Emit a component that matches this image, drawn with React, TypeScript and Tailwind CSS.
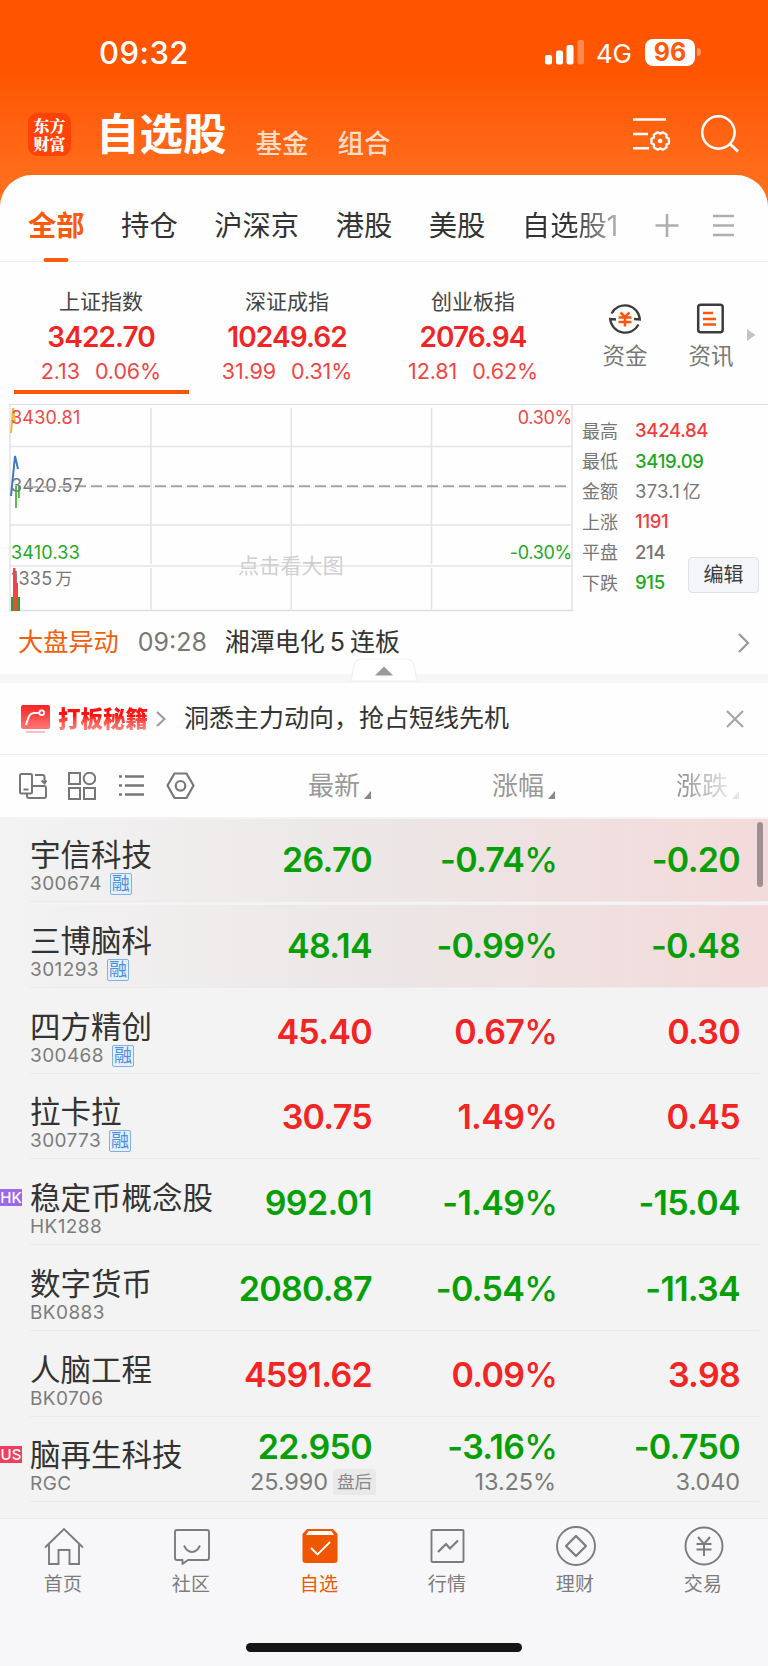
import type { ReactNode } from "react";

const GREEN = "text-[#06a006]";
const RED = "text-[#f32424]";

const groups = ["全部", "持仓", "沪深京", "港股", "美股"];

const indices = [
	{ name: "上证指数", value: "3422.70", change: "2.13", percent: "0.06%" },
	{ name: "深证成指", value: "10249.62", change: "31.99", percent: "0.31%" },
	{ name: "创业板指", value: "2076.94", change: "12.81", percent: "0.62%" },
];

const stats = [
	{ label: "最高", value: "3424.84", color: "text-[#f23c3c]" },
	{ label: "最低", value: "3419.09", color: "text-[#1fa81f]" },
	{ label: "金额", value: "373.1", unit: "亿", color: "text-[#777]" },
	{ label: "上涨", value: "1191", color: "text-[#f23c3c]" },
	{ label: "平盘", value: "214", color: "text-[#777]" },
	{ label: "下跌", value: "915", color: "text-[#1fa81f]" },
];

const columns = ["最新", "涨幅", "涨跌"];

interface Stock {
	name: string;
	code: string;
	price: string;
	percent: string;
	diff: string;
	up?: boolean;
	margin?: boolean;
	flash?: boolean;
	market?: "HK" | "US";
	after?: { price: string; percent: string; diff: string };
}

const stocks: Stock[] = [
	{ name: "宇信科技", code: "300674", price: "26.70", percent: "-0.74%", diff: "-0.20", margin: true, flash: true },
	{ name: "三博脑科", code: "301293", price: "48.14", percent: "-0.99%", diff: "-0.48", margin: true, flash: true },
	{ name: "四方精创", code: "300468", price: "45.40", percent: "0.67%", diff: "0.30", up: true, margin: true },
	{ name: "拉卡拉", code: "300773", price: "30.75", percent: "1.49%", diff: "0.45", up: true, margin: true },
	{ name: "稳定币概念股", code: "HK1288", price: "992.01", percent: "-1.49%", diff: "-15.04", market: "HK" },
	{ name: "数字货币", code: "BK0883", price: "2080.87", percent: "-0.54%", diff: "-11.34" },
	{ name: "人脑工程", code: "BK0706", price: "4591.62", percent: "0.09%", diff: "3.98", up: true },
	{
		name: "脑再生科技",
		code: "RGC",
		price: "22.950",
		percent: "-3.16%",
		diff: "-0.750",
		market: "US",
		after: { price: "25.990", percent: "13.25%", diff: "3.040" },
	},
];

const marketStyles = {
	HK: "bg-[#9d68ea]",
	US: "bg-[#ef3f5f]",
};

const StatusBar = () => {
	return (
		<div className="flex h-[98px] items-center pt-[6px] pl-[99px] text-white">
			<span className="w-[446px] pt-[2px] text-[31px] font-medium tracking-[0.5px]">09:32</span>
			<svg width="39" height="26" viewBox="0 0 39 26" fill="#fff">
				<rect x="0" y="16" width="7" height="9.5" rx="2" />
				<rect x="11" y="11.500" width="7" height="14" rx="2" />
				<rect x="21.500" y="6" width="7" height="19.500" rx="2" />
				<rect x="32.500" y="1" width="6.500" height="24.500" rx="2" opacity="0.3" />
			</svg>
			<span className="ml-[12px] w-[49px] pt-[3px] text-[26px] tracking-[-0.3px]">4G</span>
			<span className="flex h-[27px] w-[50px] items-center justify-center rounded-[8px] bg-white text-[25px] leading-none font-bold text-[#ff5a0a]">
				96
			</span>
			<span className="ml-[2px] h-[8px] w-[4px] rounded-r-full bg-white/40" />
		</div>
	);
};

const TopBar = () => {
	return (
		<div className="flex h-[77px] items-start pl-[28px] text-white">
			<div className="mt-[15px] flex h-[43px] w-[43px] items-center justify-center rounded-[9px] bg-[#ff4308]">
				<span className="w-[32px] font-['Noto_Serif_CJK_SC','Noto_Sans_CJK_SC',serif] text-[16px] leading-[18px] font-black">
					东方财富
				</span>
			</div>
			<h1 className="ml-[25px] text-[43.500px] leading-[72px] font-bold">自选股</h1>
			<span className="ml-[29px] pt-[9px] text-[26.500px] leading-[72px] font-medium text-[#ffdcc8]">基金</span>
			<span className="ml-[29px] pt-[9px] text-[26.500px] leading-[72px] font-medium text-[#ffdcc8]">组合</span>
			<svg className="mt-[18px] ml-[242px] shrink-0" width="38" height="36" viewBox="0 0 38 36" fill="none" stroke="#fff" strokeWidth="2.600">
				<path d="M0 3.500h33M0 18h15M0 32.300h16" />
				<path
					transform="translate(27.200 25) scale(0.93)"
					strokeWidth="2.500"
					strokeLinejoin="round"
					d="M9.400-2.350V2.350L6.750 3.900L6.740 6.980L2.670 9.320L0 7.800L-2.670 9.320L-6.740 6.980L-6.750 3.900L-9.400 2.350V-2.350L-6.750-3.900L-6.740-6.980L-2.670-9.320L0-7.800L2.670-9.320L6.740-6.980L6.750-3.900z"
				/>
				<circle cx="27.200" cy="25" r="2.300" fill="#fff" stroke="none" />
			</svg>
			<svg className="mt-[17px] ml-[30px] shrink-0" width="40" height="40" viewBox="0 0 40 40" fill="none" stroke="#fff" strokeWidth="2.500">
				<circle cx="17.400" cy="17.500" r="16.200" />
				<path d="M28.500 28.500l8.500 8" strokeWidth="3" />
			</svg>
		</div>
	);
};

const GroupTabs = () => {
	return (
		<div className="flex h-[87px] items-start border-b border-[#eeeef0] pl-[28px] text-[28.300px] leading-[103px] text-[#333]">
			{groups.map((group, index) => (
				<div
					key={group}
					className={`mr-[36.500px] h-[87px] shrink-0 ${index === 0 ? "relative font-bold text-[#f95a0c]" : ""}`}
				>
					{group}
					{index === 0 && (
						<span className="absolute bottom-0 left-1/2 h-[4px] w-[25px] -translate-x-1/2 rounded-sm bg-[#f95a0c]" />
					)}
				</div>
			))}
			<div className="w-[97px] shrink-0 bg-gradient-to-r from-[#333] from-50% to-[#aaa] to-95% bg-clip-text text-transparent">
				自选股1
			</div>
			<svg className="mt-[38px] ml-[36px] shrink-0" width="24" height="24" viewBox="0 0 24 24" stroke="#aeaeae" strokeWidth="2.600">
				<path d="M0.500 12.500h23M12 1v23" />
			</svg>
			<svg className="mt-[38px] ml-[34px] shrink-0" width="22" height="24" viewBox="0 0 22 24" stroke="#aeaeae" strokeWidth="2.600">
				<path d="M0 3h21M0 12.500h21M0 22h21" />
			</svg>
		</div>
	);
};

const IndexCards = () => {
	return (
		<div className="flex h-[142px] pl-[8px]">
			{indices.map((item, index) => (
				<div key={item.name} className="relative flex w-[186px] shrink-0 flex-col items-center pt-[26px]">
					<div className="text-[21px] leading-[28px] text-[#444]">{item.name}</div>
					<div className="mt-[4px] text-[28px] leading-[34px] font-semibold tracking-[-0.900px] text-[#f32424]">
						{item.value}
					</div>
					<div className="mt-[3px] flex gap-[15px] text-[21.500px] leading-[28px] tracking-[-0.100px] text-[#f04646]">
						<span>{item.change}</span>
						<span>{item.percent}</span>
					</div>
					{index === 0 && <span className="absolute bottom-[10px] left-[6px] h-[4px] w-[175px] bg-[#ff560d]" />}
				</div>
			))}
			<div className="ml-[26px] flex w-[66px] shrink-0 flex-col items-center pt-[40px] text-[22.500px] leading-[30px] text-[#777]">
				<svg className="mb-[5px]" width="34" height="34" viewBox="0 0 34 34" fill="none" stroke="#3c3c3c" strokeWidth="2.300">
					<path d="M3.500 11.500A15 15 0 0 1 31.800 17.500L26 17" />
					<path d="M30.500 22.500A15 15 0 0 1 2.200 17L8 17.500" />
					<path stroke="#ff560d" strokeWidth="2.500" d="M12.500 10.500l4.500 4.500 4.500-4.500M10.500 15.500h13M10.500 20h13M17 15v9.500" />
				</svg>
				资金
			</div>
			<div className="ml-[20px] flex w-[66px] shrink-0 flex-col items-center pt-[40px] text-[22.500px] leading-[30px] text-[#777]">
				<svg className="mb-[5px]" width="34" height="34" viewBox="0 0 34 34" fill="none" stroke="#3c3c3c" strokeWidth="2.500">
					<rect x="4.200" y="2.800" width="24.500" height="27.500" rx="2.500" />
					<path stroke="#ff560d" d="M9 11h10M9 17h13M9 22.500h13" />
				</svg>
				资讯
			</div>
			<svg className="mt-[67px] ml-[3px] shrink-0" width="9" height="12" viewBox="0 0 9 12" fill="#c4c4c4">
				<path d="M0 0l8.500 6L0 12z" />
			</svg>
		</div>
	);
};

const IndexChart = () => {
	return (
		<div className="flex h-[208px] pl-[9px]">
			<div className="relative w-[564px] shrink-0 text-[18px] leading-[20px] tracking-[0.200px] text-[#777]">
				<svg width="564" height="208" viewBox="0 0 564 208" fill="none">
					<path d="M1 0v206M563 0v206M0 205.500h564" stroke="#dddde6" strokeWidth="1.300" />
					<path d="M142 3v156M282.200 3v156M422.500 3v156M142 163v43M282.200 163v43M422.500 163v43" stroke="#e3e3ee" strokeWidth="1.600" />
					<path d="M0 41.500h563M0 120h563M0 161h563" stroke="#e3e3ee" strokeWidth="1.600" />
					<path d="M66 81.200h494" stroke="#a2a2a2" strokeWidth="2" strokeDasharray="11 5" />
					<path d="M2 28L4 3L6 17" stroke="#f3b73e" strokeWidth="2" />
					<path d="M2 91L6 51L9 64" stroke="#3f79c4" strokeWidth="2" />
					<path d="M7 81v22M10 81v12" stroke="#5dbd4f" strokeWidth="2" />
				</svg>
				<span className="absolute top-[3px] left-[2px] text-[#f04646]">3430.81</span>
				<span className="absolute top-[3px] right-[1px] tracking-[-0.300px] text-[#f04646]">0.30%</span>
				<span className="absolute top-[71px] left-[2px]">3420.57</span>
				<span className="absolute top-[138px] left-[2px] text-[#1fa81f]">3410.33</span>
				<span className="absolute top-[138px] right-[1px] tracking-[-0.300px] text-[#1fa81f]">-0.30%</span>
				<span className="absolute top-[164px] left-[2px]">1335<span className="pl-[3px] text-[17px]">万</span></span>
				<span className="absolute top-[151px] left-[229px] text-[21px] text-[#cfcfcf]">点击看大图</span>
				<svg className="absolute top-[163px] left-[2px]" width="9" height="43" viewBox="0 0 9 43">
					<path d="M0 29h2.500v14H0zM6.500 29H9v14H6.500z" fill="#1fa81f" />
					<path d="M2 0h2.500v6h1v9h1.500v28H2z" fill="#ee4545" />
				</svg>
				<svg className="absolute top-[81px] left-[18px]" width="48" height="2" viewBox="0 0 48 2">
					<path d="M0 1h48" stroke="#a2a2a2" strokeWidth="1.500" strokeDasharray="11 5" />
				</svg>
			</div>
			<div className="flex w-[106px] shrink-0 flex-col pt-[11px] pl-[9px]">
				{stats.map((stat) => (
					<div key={stat.label} className="flex h-[30.400px] items-center text-[18px] whitespace-nowrap">
						<span className="w-[53px] shrink-0 text-[#777]">{stat.label}</span>
						<span className={`text-[18.500px] ${stat.unit ? "tracking-[0.200px]" : "font-medium tracking-[-0.300px]"} ${stat.color}`}>
							{stat.value}
							{stat.unit && <span className="pl-[3px] text-[18px]">{stat.unit}</span>}
						</span>
					</div>
				))}
			</div>
			<button className="mt-[152px] ml-[9px] h-[36px] w-[71px] rounded-[4px] border border-[#dfe0e8] bg-[#f4f5f8] text-[20px] leading-[34px] text-[#3c3c3c]">
				编辑
			</button>
		</div>
	);
};

const MarketNews = () => {
	return (
		<>
			<div className="flex h-[61px] items-center pb-[2px] pl-[18px] text-[25px] text-[#333]">
				<span className="text-[25.200px] text-[#f0600f]">大盘异动</span>
				<span className="ml-[19px] w-[87px] text-[#777]">09:28</span>
				<span className="w-[513px]">湘潭电化<span className="px-[5px]">5</span>连板</span>
				<svg width="12" height="22" viewBox="0 0 12 22" fill="none" stroke="#999" strokeWidth="2.200">
					<path d="M1 2l9 9-9 9" />
				</svg>
			</div>
			<div className="relative h-[9px] bg-[#f5f6f8]">
				<svg className="absolute -top-[16px] left-[350px]" width="68" height="25" viewBox="0 0 68 25">
					<path d="M1 23L3.500 9Q5 1 12 1H56Q63 1 64.500 9L67 23z" fill="#fff" stroke="#f0f0f2" strokeWidth="1.200" />
					<path d="M25 17.500L34 8.500L43 17.500z" fill="#9a9a9a" />
				</svg>
			</div>
		</>
	);
};

const Promo = () => {
	return (
		<div className="flex h-[72px] items-center border-b border-[#efeff1] pl-[21px]">
			<svg width="29" height="28" viewBox="0 0 29 28" fill="none">
				<defs>
					<linearGradient id="promo" x1="0" y1="0" x2="0" y2="1">
						<stop offset="0" stopColor="#ff2020" />
						<stop offset="1" stopColor="#ff7777" />
					</linearGradient>
				</defs>
				<rect width="29" height="24" rx="2" fill="url(#promo)" />
				<path d="M5 20C8 10 9 8 13 8h5" stroke="#fff" strokeWidth="2" />
				<circle cx="20.700" cy="7.800" r="2.400" stroke="#fff" strokeWidth="1.800" />
				<path d="M5 27h19" stroke="#ffb0b0" strokeWidth="1.600" />
			</svg>
			<span className="ml-[8px] bg-gradient-to-b from-[#ff1111] from-40% to-[#ff8585] to-90% bg-clip-text text-[22.500px] leading-[30px] font-black text-transparent">
				打板秘籍
			</span>
			<svg className="ml-[8px]" width="10" height="18" viewBox="0 0 10 18" fill="none" stroke="#999" strokeWidth="2">
				<path d="M1 2l7.500 7L1 16" />
			</svg>
			<span className="ml-[18px] w-[542px] pt-px text-[25px] text-[#333]">洞悉主力动向，抢占短线先机</span>
			<svg width="18" height="18" viewBox="0 0 18 18" stroke="#a6a6a6" strokeWidth="2.200">
				<path d="M1 1l16 16M17 1L1 17" />
			</svg>
		</div>
	);
};

const TableHeader = () => {
	return (
		<div className="flex h-[62px] items-center text-[#999]">
			<div className="flex w-[215px] shrink-0 gap-[21px] pl-[19px]">
				<svg width="28" height="28" viewBox="0 0 28 28" fill="none" stroke="#777" strokeWidth="2">
					<rect x="1" y="2" width="12" height="19.500" rx="1.500" />
					<path d="M4.500 17.500h5M16 3h7.500q2 0 2 2v6.500M22.500 8.500l3 3 2-3M13 14h12q2 0 2 2v8q0 2-2 2H10q-2 0-2-2v-2" />
				</svg>
				<svg width="28" height="28" viewBox="0 0 28 28" fill="none" stroke="#777" strokeWidth="2">
					<rect x="1" y="1" width="11" height="11" />
					<circle cx="21.500" cy="6.500" r="5.800" />
					<rect x="1" y="16" width="11" height="11" />
					<rect x="16" y="16" width="11" height="11" />
				</svg>
				<svg width="28" height="28" viewBox="0 0 28 28" stroke="#777" strokeWidth="2.600">
					<path d="M8 4.500h19M8 13.500h19M8 22.500h19M2 4.500h3M2 13.500h3M2 22.500h3" />
				</svg>
				<svg width="30" height="28" viewBox="0 0 30 28" fill="none" stroke="#777" strokeWidth="2.200">
					<path strokeLinejoin="round" d="M8.500 1.500h12L27.500 13.500l-7 12.500h-12L1.500 13.500z" />
					<circle cx="14.500" cy="13.800" r="4.800" />
				</svg>
			</div>
			{columns.map((column, index) => (
				<div
					key={column}
					className={`flex shrink-0 items-end justify-end text-[26px] leading-[36px] ${index === 0 ? "w-[156px]" : "w-[184px]"} ${index === 2 ? "[mask-image:linear-gradient(to_right,black_70%,#0003_95%)]" : ""}`}
				>
					{column}
					<svg className="mb-[5px] ml-[4px]" width="7" height="8" viewBox="0 0 7 8" fill="#888">
						<path d="M7 0v8H0z" />
					</svg>
				</div>
			))}
		</div>
	);
};

const Cell = ({ value, sub, up, children }: { value: string; sub?: string; up?: boolean; children?: ReactNode }) => {
	const isPercent = value.endsWith("%");

	return (
		<div className={`flex w-[184px] shrink-0 flex-col items-end ${sub ? "pt-[7px]" : "pt-[20px]"}`}>
			<span className={`text-[34px] leading-[42px] font-semibold tracking-[-0.700px] ${up ? RED : GREEN}`}>
				{isPercent ? value.slice(0, -1) : value}
				{isPercent && <span className="-mr-px font-medium tracking-[-1px]">%</span>}
			</span>
			{sub && (
				<span className="relative text-[23.500px] leading-[28px] tracking-[-0.100px] text-[#7c7c7c]">
					{sub}
					{children}
				</span>
			)}
		</div>
	);
};

const StockRow = ({ stock }: { stock: Stock }) => {
	return (
		<div className="relative h-[85.750px]">
			<div
				className={`flex h-[84px] ${stock.flash ? "border-t-2 border-[#f3f3f3] bg-gradient-to-r from-[#f3f3f3] via-[#ece6e6] via-50% to-[#f4dada]" : "pt-[2px]"}`}
			>
				<div className="w-[188px] shrink-0 pt-[17px] pl-[30px] whitespace-nowrap">
					{stock.market && (
						<span
							className={`absolute top-[29px] left-0 h-[17px] w-[22px] text-center text-[15px] leading-[17px] font-medium text-white ${marketStyles[stock.market]}`}
						>
							{stock.market}
						</span>
					)}
					<div className="text-[30.500px] leading-[37px] text-[#333]">{stock.name}</div>
					<div className="flex items-center text-[19px] leading-[22px] tracking-[0.400px] text-[#7c7c7c]">
						{stock.code}
						{stock.margin && (
							<span className="ml-[8px] flex h-[22px] w-[22px] items-center justify-center rounded-[2px] border border-[#7fb0e8] bg-[#e6f0fb] text-[18px] leading-none tracking-normal text-[#4a90e0]">
								融
							</span>
						)}
					</div>
				</div>
				<Cell value={stock.price} sub={stock.after?.price} up={stock.up}>
					<span className="absolute top-[1px] -right-[4px] h-[26px] w-[43px] rounded-[3px] bg-[#e9e9e9] text-center text-[17.500px] leading-[25px] text-[#888]">
						盘后
					</span>
					<span className="inline-block w-[44px]" />
				</Cell>
				<Cell value={stock.percent} sub={stock.after?.percent} up={stock.up} />
				<Cell value={stock.diff} sub={stock.after?.diff} up={stock.up} />
			</div>
			<div className="mr-[9px] ml-[30px] h-px bg-[#ebebeb]" />
		</div>
	);
};

const tabs = [
	{
		label: "首页",
		icon: <path d="M1 20.500L20 2l19 18.500M5 17v20h9.500V23h11v14H35V17" />,
	},
	{
		label: "社区",
		icon: (
			<>
				<path strokeLinejoin="round" d="M5 3h30q2 0 2 2v26q0 2-2 2H16l-5.500 4v-4H5q-2 0-2-2V5q0-2 2-2z" />
				<path d="M12 18.500Q15 25 20 25t8-6.500" />
			</>
		),
	},
	{
		label: "自选",
		active: true,
		icon: (
			<>
				<path fill="#f05500" stroke="none" d="M7 2h26l4.500 5v26q0 3-3 3h-29q-3 0-3-3V7z" />
				<path fill="#fff" stroke="none" d="M8.500 4h23l2.500 4H6z" />
				<path stroke="#fff" d="M11 21l6.500 6.500L30 15" />
			</>
		),
	},
	{
		label: "行情",
		icon: (
			<>
				<rect x="3.500" y="3" width="32" height="32" rx="1" />
				<path strokeWidth="2.200" d="M10 25l8-8 4 4.500L30 13.500" />
			</>
		),
	},
	{
		label: "理财",
		icon: (
			<>
				<circle cx="20" cy="19" r="19" />
				<path strokeWidth="2.200" strokeLinejoin="round" d="M20 9l10 10-10 10-10-10z" />
			</>
		),
	},
	{
		label: "交易",
		icon: (
			<>
				<circle cx="20" cy="19" r="18.500" />
				<path strokeWidth="2" d="M14 10l6 7 6-7M12.500 17h15M12.500 22.500h15M20 17v12" />
			</>
		),
	},
];

const BottomNav = () => {
	return (
		<nav className="flex h-[149px] flex-col items-center border-t border-[#e9e9ee] bg-[#f7f7fa]">
			<div className="flex w-full">
				{tabs.map((tab) => (
					<div
						key={tab.label}
						className={`flex w-[128px] flex-col items-center pt-[8px] text-[19px] leading-[26px] ${tab.active ? "text-[#f05500]" : "text-[#7c7c7c]"}`}
					>
						<svg width="40" height="40" viewBox="0 0 40 40" fill="none" stroke="#7c7c7c" strokeWidth="1.900" overflow="visible">
							{tab.icon}
						</svg>
						<span className="mt-[5px] mr-[2px] tracking-[0.200px]">{tab.label}</span>
					</div>
				))}
			</div>
			<div className="mt-[45px] h-[9px] w-[276px] rounded-full bg-[#151515]" />
		</nav>
	);
};

export default function App() {
	return (
		<div className="h-[1666px] w-[768px] overflow-hidden bg-white font-['Inter','Noto_Sans_CJK_SC',sans-serif]">
			<header className="h-[210px] bg-gradient-to-b from-[#ff5500] from-35% to-[#ff7420]">
				<StatusBar />
				<TopBar />
			</header>
			<main className="relative -mt-[35px] rounded-t-[32px] bg-[#fefefe]">
				<GroupTabs />
				<IndexCards />
				<div className="ml-[9px] h-px bg-[#dddde6]" />
				<IndexChart />
				<MarketNews />
				<Promo />
				<TableHeader />
			</main>
			<section className="relative h-[701px] bg-[#f3f3f3]">
				{stocks.map((stock) => (
					<StockRow key={stock.code} stock={stock} />
				))}
				<span className="absolute top-[5px] right-[5px] h-[65px] w-[6px] rounded-full bg-[#a08f8f]" />
			</section>
			<BottomNav />
		</div>
	);
}
